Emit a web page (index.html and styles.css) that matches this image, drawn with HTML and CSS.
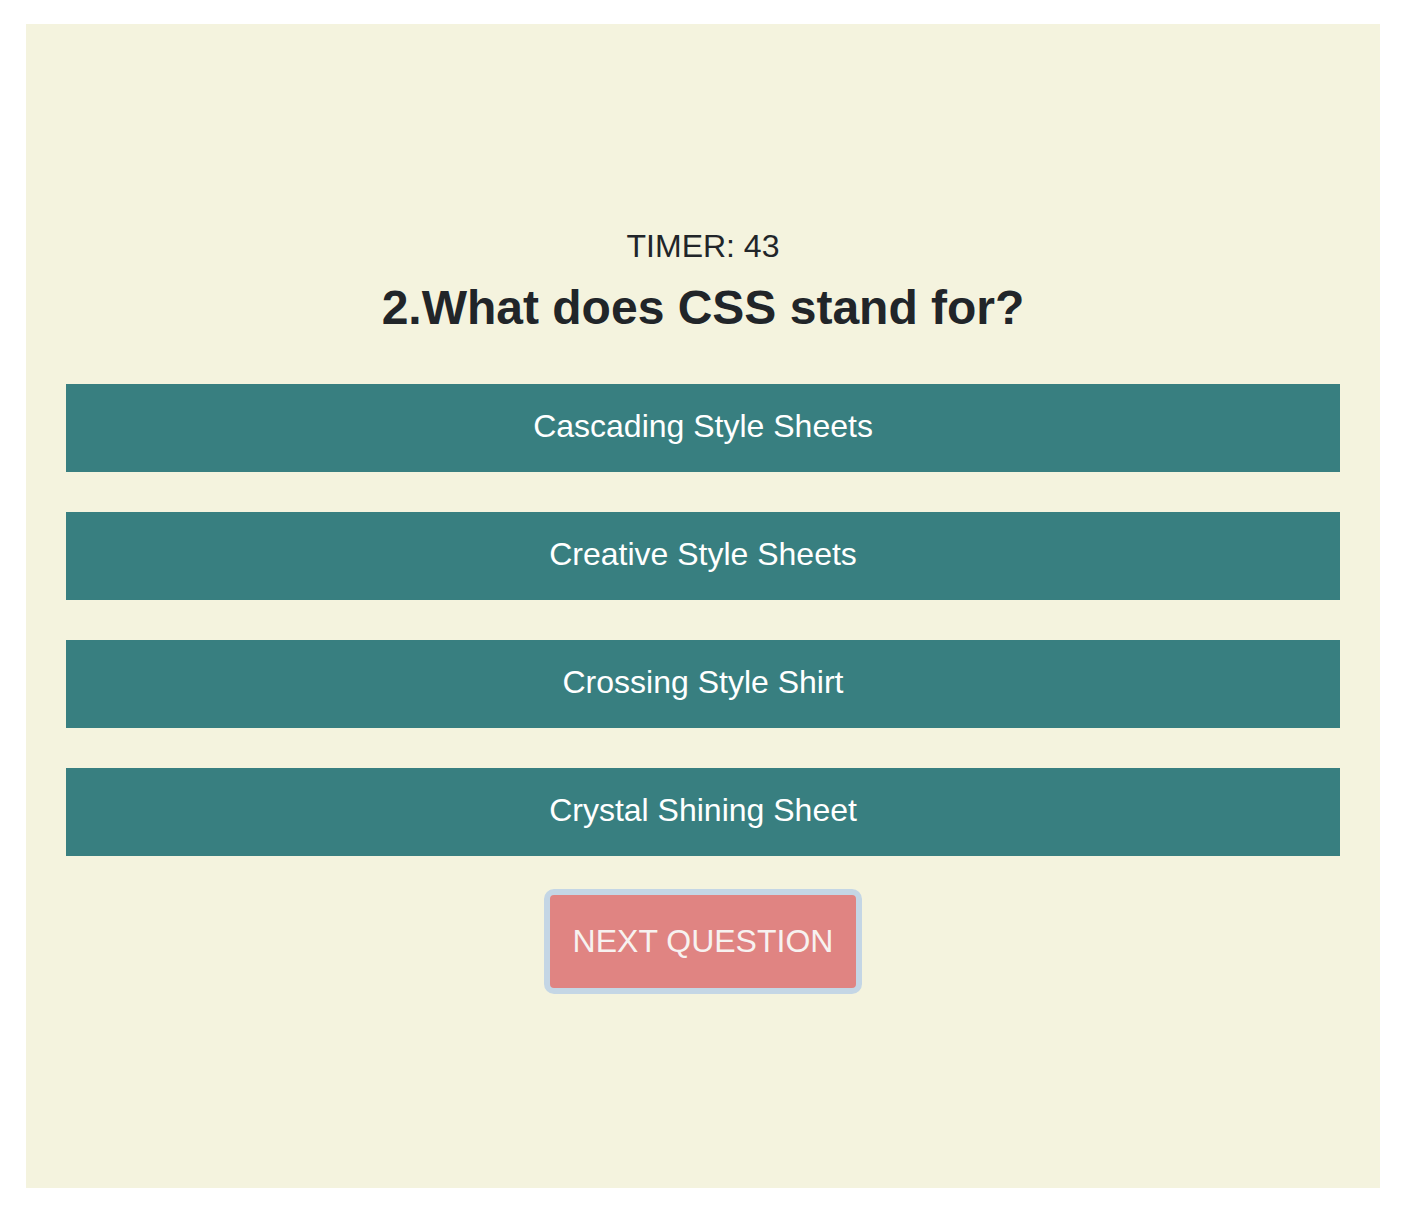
FILE: index.html
```html
<!DOCTYPE html>
<html lang="en">
<head>
<meta charset="utf-8">
<title>Quiz</title>
<link rel="stylesheet" href="styles.css">
</head>
<body>
<main class="quiz">
  <p class="timer">TIMER: 43</p>
  <h1 class="question">2.What does CSS stand for?</h1>
  <div class="answers">
    <button class="answer">Cascading Style Sheets</button>
    <button class="answer">Creative Style Sheets</button>
    <button class="answer">Crossing Style Shirt</button>
    <button class="answer">Crystal Shining Sheet</button>
  </div>
  <button class="next">NEXT QUESTION</button>
</main>
</body>
</html>
```
FILE: styles.css
```css
html, body {
  margin: 0;
  padding: 0;
  background: #ffffff;
}
body {
  font-family: "Liberation Sans", Arial, sans-serif;
  color: #212529;
}
.quiz {
  box-sizing: border-box;
  width: 1354px;
  height: 1164px;
  margin: 24px 0 32px 26px;
  padding: 204px 40px 0;
  background: #f4f3de;
  display: flex;
  flex-direction: column;
  align-items: center;
}
.timer {
  margin: 0 0 15px;
  font-size: 32px;
  line-height: 37px;
  text-align: center;
}
.question {
  margin: 0 0 49px;
  font-size: 48px;
  line-height: 55px;
  font-weight: 700;
  text-align: center;
}
.answers {
  width: 100%;
  display: flex;
  flex-direction: column;
  gap: 40px;
}
.answer {
  box-sizing: border-box;
  height: 88px;
  width: 100%;
  border: none;
  margin: 0;
  padding: 0 0 3px;
  background: #387f80;
  color: #ffffff;
  font-family: "Liberation Sans", Arial, sans-serif;
  font-size: 32px;
  line-height: 37px;
  cursor: pointer;
}
.next {
  margin-top: 33px;
  box-sizing: border-box;
  border: 6px solid #c4d6e5;
  border-radius: 10px;
  background: #e08482;
  color: #f7f2f0;
  font-family: "Liberation Sans", Arial, sans-serif;
  font-size: 32px;
  line-height: 37px;
  padding: 28px 23px;
  cursor: pointer;
}
```
